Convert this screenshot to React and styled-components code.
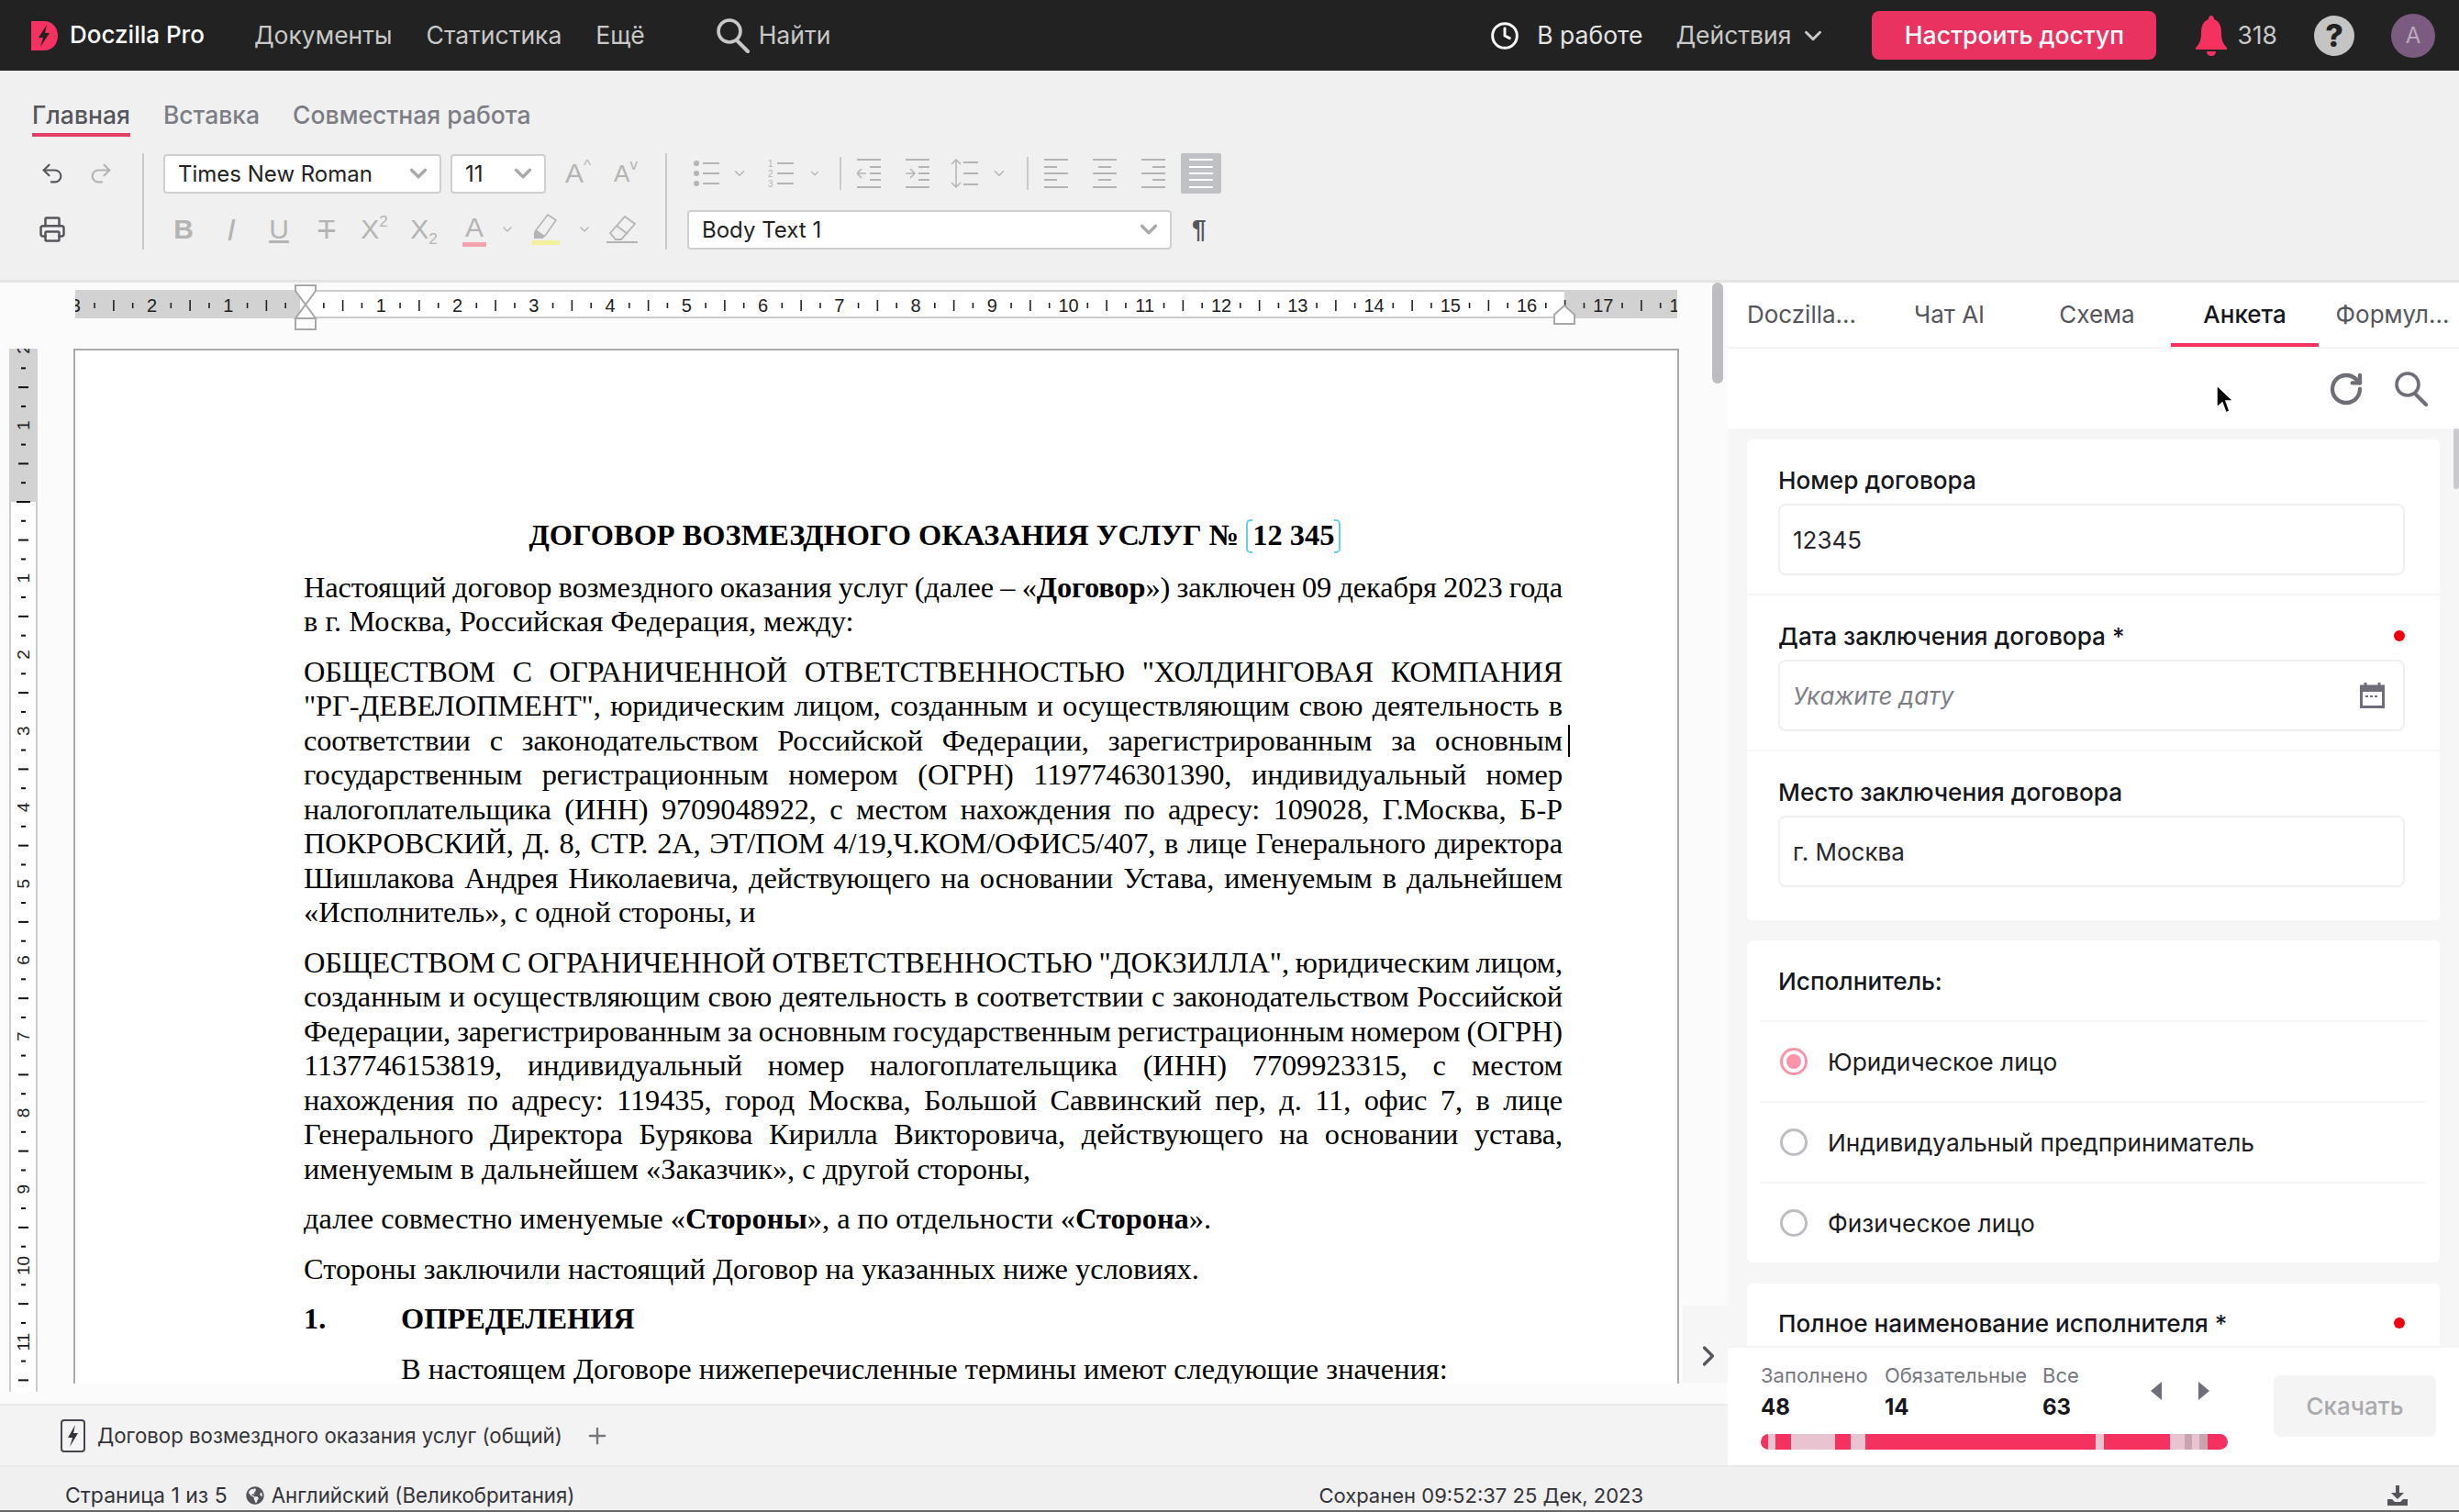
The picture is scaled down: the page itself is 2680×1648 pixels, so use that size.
import React from 'react';
import styled, { createGlobalStyle } from 'styled-components';
import { ChevronDown, ChevronRight, Clock, Plus, Printer, Redo2, RotateCw, Undo2 } from 'lucide-react';
import { FaGlobeAmericas } from 'react-icons/fa';

const GlobalStyle = createGlobalStyle`
  html, body {
    margin: 0;
    padding: 0;
    background: #fff;
    font-family: Inter, "Noto Sans", sans-serif;
  }
  * {
    box-sizing: border-box;
  }
`;

const PINK = '#e93260';
const UNIT = 83.25;

/* ---------- drawn icons ---------- */

const Logo = () => (
  <svg width="29" height="32" viewBox="0 0 29 32">
    <path d="M0 0 H14 C23 0 29 7 29 16 C29 25 23 32 14 32 H0 Z" fill="#f5325f" />
    <path d="M17 4 L8 18 H13 L10 28 L20 13 H15 Z" fill="#222" />
  </svg>
);

const Bell = () => (
  <svg width="34" height="44" viewBox="0 0 34 44">
    <path d="M17 0 C19 0 20 2 20 4 C26 6 28 12 28 19 C28 27 30 31 34 35 V37 H0 V35 C4 31 6 27 6 19 C6 12 8 6 14 4 C14 2 15 0 17 0 Z" fill="#f5325f" />
    <path d="M12 39 H22 C22 42 20 44 17 44 C14 44 12 42 12 39 Z" fill="#f5325f" />
  </svg>
);

const SearchGlyph = ({ color, size }) => (
  <svg width={size} height={size} viewBox="0 0 38 38" fill="none" stroke={color} strokeWidth="3.6" strokeLinecap="round">
    <circle cx="15" cy="14" r="12" />
    <path d="M23 24 L35 36" strokeWidth="4" />
  </svg>
);

const ListLines = ({ ordered }) => (
  <svg width="28" height="32" viewBox="0 0 28 32" fill="#b4b4b4" stroke="#b4b4b4">
    {ordered ? (
      <g stroke="none" fontSize="10" fontFamily="Liberation Sans">
        <text x="0" y="9">1</text>
        <text x="0" y="20">2</text>
        <text x="0" y="31">3</text>
      </g>
    ) : (
      <g stroke="none">
        <circle cx="3" cy="5" r="3" />
        <circle cx="3" cy="16" r="3" />
        <circle cx="3" cy="27" r="3" />
      </g>
    )}
    <path d="M10 5 H28 M10 16 H28 M10 27 H28" strokeWidth="2" />
  </svg>
);

const IndentIcon = ({ out }) => (
  <svg width="26" height="32" viewBox="0 0 26 32" fill="none" stroke="#b4b4b4" strokeWidth="2">
    <path d="M0 1 H26 M0 31 H26 M14 9 H26 M14 16 H26 M14 23 H26" />
    {out
      ? <path d="M10 16 H0 M5 11 L0 16 L5 21" strokeWidth="1.5" />
      : <path d="M0 16 H10 M5 11 L10 16 L5 21" strokeWidth="1.5" />}
  </svg>
);

const SpacingIcon = () => (
  <svg width="30" height="34" viewBox="0 0 30 34" fill="none" stroke="#b4b4b4" strokeWidth="2">
    <path d="M6 2 V32 M1 7 L6 2 L11 7 M1 27 L6 32 L11 27" strokeWidth="1.5" />
    <path d="M14 5 H30 M14 17 H30 M14 29 H30" />
  </svg>
);

const ALIGN_PATHS = {
  left: 'M0 1 H26 M0 9 H14 M0 16 H26 M0 23 H14 M0 31 H26',
  center: 'M0 1 H26 M6 9 H20 M0 16 H26 M6 23 H20 M0 31 H26',
  right: 'M0 1 H26 M12 9 H26 M0 16 H26 M12 23 H26 M0 31 H26',
  full: 'M0 1 H26 M0 9 H26 M0 16 H26 M0 23 H26 M0 31 H26',
};

const AlignIcon = ({ kind }) => (
  <svg width="26" height="32" viewBox="0 0 26 32" fill="none" stroke={kind === 'full' ? '#fff' : '#b4b4b4'} strokeWidth="2">
    <path d={ALIGN_PATHS[kind]} />
  </svg>
);

const MarkerIcon = () => (
  <svg width="30" height="34" viewBox="0 0 30 34" fill="none">
    <path d="M4 18 L17 1 L26 7 L14 24 H4 Z" stroke="#b4b4b4" strokeWidth="1.6" />
    <path d="M2 20 L2 27 H12 L14 24 L4 17 Z" fill="#b4b4b4" />
    <rect x="0" y="29" width="30" height="5" fill="#f3ef9d" />
  </svg>
);

const EraserIcon = () => (
  <svg width="34" height="32" viewBox="0 0 34 32" fill="none" stroke="#b4b4b4" strokeWidth="1.8">
    <path d="M4 20 L20 2 L31 10 L16 27 H10 Z M11 12 L23 21" />
    <path d="M0 30 H34" />
  </svg>
);

const CalendarIcon = () => (
  <svg width="27" height="28" viewBox="0 0 27 28" fill="none">
    <path d="M6 0 V4 M21 0 V4" stroke="#6e6e78" strokeWidth="3" />
    <rect x="1.5" y="4" width="24" height="22.5" stroke="#6e6e78" strokeWidth="3" />
    <rect x="1.5" y="4" width="24" height="6" fill="#6e6e78" />
    <path d="M6 15 H21" stroke="#6e6e78" strokeWidth="2" strokeDasharray="3 2" />
  </svg>
);

const DownloadIcon = () => (
  <svg width="22" height="22" viewBox="0 0 22 22" fill="#55555c">
    <path d="M9 0 H13 V8 H18 L11 15 L4 8 H9 Z" />
    <path d="M0 15 H5 L8 18 H14 L17 15 H22 V22 H0 Z" />
  </svg>
);

const DocBadge = () => (
  <svg width="27" height="36" viewBox="0 0 27 36" fill="none">
    <rect x="1" y="1" width="25" height="34" rx="3" stroke="#44444c" strokeWidth="2" />
    <path d="M16 6 L8 20 H13 L10 30 L19 15 H14 Z" fill="#33333a" />
  </svg>
);

const Cursor = () => (
  <svg width="20" height="32" viewBox="0 0 20 32">
    <path d="M1 1 V25 L7 20 L11 31 L15 29 L11 18 H19 Z" fill="#000" stroke="#fff" strokeWidth="1.5" />
  </svg>
);

const CaretArrow = ({ right }) => (
  <svg width="14" height="20" viewBox="0 0 14 20" fill="#6e6e78">
    <path d={right ? 'M1 0 L13 10 L1 20 Z' : 'M13 0 L1 10 L13 20 Z'} />
  </svg>
);

/* ---------- rulers ---------- */

const rulerTicks = (from, to) => {
  const ticks = [];
  for (let n = from; n < to; n++) {
    ticks.push({ at: n + 0.25, long: false }, { at: n + 0.5, long: true }, { at: n + 0.75, long: false });
  }
  return ticks;
};

const HorizontalRuler = () => {
  const zero = 250;
  const numbers = [-3, -2, -1, 1, 2, 3, 4, 5, 6, 7, 8, 9, 10, 11, 12, 13, 14, 15, 16, 17, 18];
  return (
    <RulerSvg width="1746" height="31">
      <rect width="1746" height="31" fill="#fff" />
      <path d="M0 1 H1746 M0 30 H1746" stroke="#ccc" strokeWidth="2" />
      <rect width="245" height="31" fill="#d2d2d2" />
      <rect x="1623" width="123" height="31" fill="#d2d2d2" />
      <svg width="1746" height="31">
        {rulerTicks(-3, 18).map(({ at, long }) => (
          <path key={at} d={`M${zero + at * UNIT} ${long ? 11 : 14} V${long ? 23 : 20}`} stroke="#222" strokeWidth="1.6" />
        ))}
        {numbers.map((n) => (
          <text key={n} x={zero + n * UNIT} y="24" fontSize="20" textAnchor="middle" fontFamily="Liberation Sans" fill="#222">
            {Math.abs(n)}
          </text>
        ))}
      </svg>
      <path d="M240 -5 H262 V1 L251 16 L240 1 Z M251 16 L262 31 H240 Z" fill="#fff" stroke="#a8a8a8" strokeWidth="2" />
      <rect x="240" y="31" width="22" height="12" fill="#fff" stroke="#a8a8a8" strokeWidth="2" />
      <path d="M1612 37 V27 L1623 17 L1634 27 V37 Z" fill="#fff" stroke="#a8a8a8" strokeWidth="2" />
    </RulerSvg>
  );
};

const VerticalRuler = () => {
  const zero = 167;
  const numbers = [-2, -1, 1, 2, 3, 4, 5, 6, 7, 8, 9, 10, 11];
  return (
    <RulerSvg width="31" height="1137">
      <rect width="31" height="1137" fill="#fff" />
      <path d="M1 0 V1137 M30 0 V1137" stroke="#ccc" strokeWidth="2" />
      <rect width="31" height={zero} fill="#d2d2d2" />
      <path d={`M8 ${zero} H23`} stroke="#111" strokeWidth="2" />
      <svg width="31" height="1137">
        {rulerTicks(-2, 12).map(({ at, long }) => (
          <path key={at} d={`M${long ? 10 : 13} ${zero + at * UNIT} H${long ? 21 : 18}`} stroke="#111" strokeWidth="2" />
        ))}
        {numbers.map((n) => (
          <text
            key={n}
            x="0"
            y="0"
            fontSize="19"
            textAnchor="middle"
            fontFamily="Liberation Sans"
            fill="#222"
            transform={`translate(22 ${zero + n * UNIT}) rotate(-90)`}
          >
            {Math.abs(n)}
          </text>
        ))}
      </svg>
    </RulerSvg>
  );
};

/* ---------- data ---------- */

const SECOND_PARAGRAPH = [
  'ОБЩЕСТВОМ С ОГРАНИЧЕННОЙ ОТВЕТСТВЕННОСТЬЮ "ХОЛДИНГОВАЯ КОМПАНИЯ',
  '"РГ-ДЕВЕЛОПМЕНТ", юридическим лицом, созданным и осуществляющим свою деятельность в',
  'соответствии с законодательством Российской Федерации, зарегистрированным за основным',
  'государственным регистрационным номером (ОГРН) 1197746301390, индивидуальный номер',
  'налогоплательщика (ИНН) 9709048922, с местом нахождения по адресу: 109028, Г.Москва, Б-Р',
  'ПОКРОВСКИЙ, Д. 8, СТР. 2А, ЭТ/ПОМ 4/19,Ч.КОМ/ОФИС5/407, в лице Генерального директора',
  'Шишлакова Андрея Николаевича, действующего на основании Устава, именуемым в дальнейшем',
  '«Исполнитель», с одной стороны, и',
];

const THIRD_PARAGRAPH = [
  'ОБЩЕСТВОМ С ОГРАНИЧЕННОЙ ОТВЕТСТВЕННОСТЬЮ "ДОКЗИЛЛА", юридическим лицом,',
  'созданным и осуществляющим свою деятельность в соответствии с законодательством Российской',
  'Федерации, зарегистрированным за основным государственным регистрационным номером (ОГРН)',
  '1137746153819, индивидуальный номер налогоплательщика (ИНН) 7709923315, с местом',
  'нахождения по адресу: 119435, город Москва, Большой Саввинский пер, д. 11, офис 7, в лице',
  'Генерального Директора Бурякова Кирилла Викторовича, действующего на основании устава,',
  'именуемым в дальнейшем «Заказчик», с другой стороны,',
];

const PANEL_TABS = ['Doczilla...', 'Чат AI', 'Схема', 'Анкета', 'Формул...'];
const RADIOS = ['Юридическое лицо', 'Индивидуальный предприниматель', 'Физическое лицо'];
const STATS = [
  { label: 'Заполнено', value: 48, width: 135 },
  { label: 'Обязательные', value: 14, width: 172 },
  { label: 'Все', value: 63, width: 90 },
];
// empty parts of the progress bar, in percent of its width
const GAPS = [
  { from: 1.6, to: 3.2, color: '#e9c3cf' },
  { from: 6.4, to: 16, color: '#e9c3cf' },
  { from: 19.2, to: 22.4, color: '#e9c3cf' },
  { from: 71.7, to: 73.4, color: '#e9c3cf' },
  { from: 87.6, to: 90.8, color: '#e9c3cf' },
  { from: 90.8, to: 92.4, color: '#c9a3b0' },
  { from: 92.4, to: 94, color: '#e9c3cf' },
  { from: 94, to: 95.6, color: '#c9a3b0' },
];

/* ---------- page ---------- */

const Justified = ({ lines }) => lines.map((line, i) => (
  <Line key={line} $justify={i < lines.length - 1}>{line}</Line>
));

const App = () => (
  <Page>
    <GlobalStyle />
    <TopBar>
      <Logo />
      <Brand>Doczilla Pro</Brand>
      <NavLink $first>Документы</NavLink>
      <NavLink>Статистика</NavLink>
      <NavLink>Ещё</NavLink>
      <SearchBox>
        <SearchGlyph size={38} color="#c8c8c8" />
        <NavText>Найти</NavText>
      </SearchBox>
      <TopRight>
        <Clock size={32} color="#fff" strokeWidth={2.2} />
        <StateText>В работе</StateText>
        <ActionsText>Действия</ActionsText>
        <ActionsChevron size={30} color="#c8c8c8" strokeWidth={2.4} />
        <AccessButton>Настроить доступ</AccessButton>
        <Bell />
        <Counter>318</Counter>
        <HelpBadge>?</HelpBadge>
        <Avatar>А</Avatar>
      </TopRight>
    </TopBar>

    <Ribbon>
      <RibbonTabs>
        <RibbonTab $active>Главная</RibbonTab>
        <RibbonTab>Вставка</RibbonTab>
        <RibbonTab>Совместная работа</RibbonTab>
      </RibbonTabs>
      <Toolbar>
        <HistoryGroup>
          <ToolRow>
            <Cell $w={44}><Undo2 size={28} color="#55555c" strokeWidth={1.8} /></Cell>
            <Cell $w={62}><Redo2 size={28} color="#b4b4b4" strokeWidth={1.8} /></Cell>
          </ToolRow>
          <ToolRow>
            <Cell $w={44}><Printer size={30} color="#55555c" strokeWidth={2} /></Cell>
          </ToolRow>
        </HistoryGroup>
        <Separator />
        <FontGroup>
          <ToolRow>
            <SelectBox $w={303} $left={21}>
              <SelectText>Times New Roman</SelectText>
              <ChevronDown size={30} color="#a9a9a9" strokeWidth={2.6} />
            </SelectBox>
            <SelectBox $w={104} $left={10}>
              <SelectText>11</SelectText>
              <ChevronDown size={30} color="#a9a9a9" strokeWidth={2.6} />
            </SelectBox>
            <Cell $w={70}><Glyph>A<Sup>^</Sup></Glyph></Cell>
            <Cell $w={34}><Glyph $small>A<Sup>v</Sup></Glyph></Cell>
          </ToolRow>
          <ToolRow $left={17}>
            <Cell $w={52}><Glyph $bold>B</Glyph></Cell>
            <Cell $w={52}><Glyph $italic $tall>I</Glyph></Cell>
            <Cell $w={52}><Glyph $under>U</Glyph></Cell>
            <Cell $w={52}><Glyph $strike>T</Glyph></Cell>
            <Cell $w={52}><Glyph>X<Sup>2</Sup></Glyph></Cell>
            <Cell $w={56}><Glyph>X<Sub>2</Sub></Glyph></Cell>
            <Cell $w={54}><ColorGlyph>A</ColorGlyph></Cell>
            <Cell $w={18}><ChevronDown size={16} color="#b4b4b4" /></Cell>
            <Cell $w={66}><MarkerIcon /></Cell>
            <Cell $w={18}><ChevronDown size={16} color="#b4b4b4" /></Cell>
            <Cell $w={64}><EraserIcon /></Cell>
          </ToolRow>
        </FontGroup>
        <Separator />
        <ParagraphGroup>
          <ToolRow $left={22}>
            <Cell $w={42}><ListLines /></Cell>
            <Cell $w={30}><ChevronDown size={18} color="#b4b4b4" /></Cell>
            <Cell $w={60}><ListLines ordered /></Cell>
            <Cell $w={14}><ChevronDown size={18} color="#b4b4b4" /></Cell>
            <MiniSeparator />
            <Cell $w={60}><IndentIcon out /></Cell>
            <Cell $w={46}><IndentIcon /></Cell>
            <Cell $w={56}><SpacingIcon /></Cell>
            <Cell $w={20}><ChevronDown size={18} color="#b4b4b4" /></Cell>
            <MiniSeparator />
            <Cell $w={60}><AlignIcon kind="left" /></Cell>
            <Cell $w={46}><AlignIcon kind="center" /></Cell>
            <Cell $w={60}><AlignIcon kind="right" /></Cell>
            <Cell $w={44} $active><AlignIcon kind="full" /></Cell>
          </ToolRow>
          <ToolRow>
            <SelectBox $w={528} $left={22}>
              <SelectText>Body Text 1</SelectText>
              <ChevronDown size={30} color="#a9a9a9" strokeWidth={2.6} />
            </SelectBox>
            <Pilcrow>¶</Pilcrow>
          </ToolRow>
        </ParagraphGroup>
      </Toolbar>
    </Ribbon>

    <Workspace>
      <DocColumn>
        <DocArea>
          <RulerTop><HorizontalRuler /></RulerTop>
          <PageRow>
            <VerticalRuler />
            <Sheet>
              <Title>
                ДОГОВОР ВОЗМЕЗДНОГО ОКАЗАНИЯ УСЛУГ № <Bracket>12 345</Bracket>
              </Title>
              <Paragraph>
                <Line $justify>Настоящий договор возмездного оказания услуг (далее – «<b>Договор</b>») заключен 09 декабря 2023 года</Line>
                <Line>в г. Москва, Российская Федерация, между:</Line>
              </Paragraph>
              <Paragraph>
                <Line $justify>{SECOND_PARAGRAPH[0]}</Line>
                <Line $justify>{SECOND_PARAGRAPH[1]}</Line>
                <Line $justify>{SECOND_PARAGRAPH[2]}<TextCaret /></Line>
                <Justified lines={SECOND_PARAGRAPH.slice(3)} />
              </Paragraph>
              <Paragraph>
                <Justified lines={THIRD_PARAGRAPH} />
              </Paragraph>
              <Paragraph>
                <Line>далее совместно именуемые «<b>Стороны</b>», а по отдельности «<b>Сторона</b>».</Line>
              </Paragraph>
              <Paragraph>
                <Line>Стороны заключили настоящий Договор на указанных ниже условиях.</Line>
              </Paragraph>
              <Heading>
                <HeadingNumber>1.</HeadingNumber>ОПРЕДЕЛЕНИЯ
              </Heading>
              <Indented>В настоящем Договоре нижеперечисленные термины имеют следующие значения:</Indented>
            </Sheet>
          </PageRow>
          <ScrollThumb />
          <CollapseTab><ChevronRight size={36} color="#55555c" strokeWidth={2.2} /></CollapseTab>
        </DocArea>
        <TabBar>
          <DocBadge />
          <TabTitle>Договор возмездного оказания услуг (общий)</TabTitle>
          <Plus size={28} color="#77777f" strokeWidth={2} />
        </TabBar>
      </DocColumn>

      <SidePanel>
        <PanelTabs>
          {PANEL_TABS.map((tab) => (
            <PanelTab key={tab} $active={tab === 'Анкета'}>{tab}</PanelTab>
          ))}
        </PanelTabs>
        <PanelTools>
          <RotateCw size={40} color="#6e6e78" strokeWidth={2.6} />
          <SearchGlyph size={38} color="#6e6e78" />
          <CursorSpot><Cursor /></CursorSpot>
        </PanelTools>
        <FormScroll>
          <FormThumb />
          <Card>
            <Field>
              <FieldLabel>Номер договора</FieldLabel>
              <InputBox>12345</InputBox>
            </Field>
            <Field>
              <FieldLabel>Дата заключения договора *<RequiredDot /></FieldLabel>
              <InputBox $placeholder>Укажите дату<CalendarIcon /></InputBox>
            </Field>
            <Field $last>
              <FieldLabel>Место заключения договора</FieldLabel>
              <InputBox>г. Москва</InputBox>
            </Field>
          </Card>
          <RadioCard>
            <RadioHeader>Исполнитель:</RadioHeader>
            {RADIOS.map((label, i) => (
              <RadioRow key={label} $last={i === RADIOS.length - 1}>
                <RadioMark $checked={i === 0} />
                {label}
              </RadioRow>
            ))}
          </RadioCard>
          <LastCard>
            <FieldLabel>Полное наименование исполнителя *<RequiredDot /></FieldLabel>
          </LastCard>
        </FormScroll>
        <PanelFooter>
          <FooterStats>
            <StatsRow>
              {STATS.map((stat) => (
                <Stat key={stat.label} $w={stat.width}>
                  <StatLabel>{stat.label}</StatLabel>
                  <StatValue>{stat.value}</StatValue>
                </Stat>
              ))}
              <Arrows>
                <CaretArrow />
                <CaretArrow right />
              </Arrows>
            </StatsRow>
            <ProgressBar>
              {GAPS.map((gap) => (
                <ProgressGap
                  key={gap.from}
                  style={{ left: `${gap.from}%`, width: `${gap.to - gap.from}%`, background: gap.color }}
                />
              ))}
            </ProgressBar>
          </FooterStats>
          <DownloadButton>Скачать</DownloadButton>
        </PanelFooter>
      </SidePanel>
    </Workspace>

    <StatusBar>
      <StatusText>Страница 1 из 5</StatusText>
      <LanguageText><FaGlobeAmericas size={20} color="#55555c" />Английский (Великобритания)</LanguageText>
      <SavedText>Сохранен 09:52:37 25 Дек, 2023</SavedText>
      <StatusIcon><DownloadIcon /></StatusIcon>
    </StatusBar>
  </Page>
);

const Page = styled.div`
  width: 2680px;
  height: 1648px;
  display: flex;
  flex-direction: column;
  overflow: hidden;
  border-bottom: 2px solid #666;
`;

const TopBar = styled.header`
  height: 77px;
  flex: none;
  display: flex;
  align-items: center;
  padding: 0 26px 0 34px;
  background: #222222;
  color: #c8c8c8;
  font-size: 26.5px;
`;

const Brand = styled.div`
  margin-left: 13px;
  padding-bottom: 2px;
  color: #fff;
  font-size: 26px;
  font-weight: 500;
`;

const NavLink = styled.div`
  margin-left: ${(p) => (p.$first ? '54px' : '37px')};
  padding-bottom: 2px;
`;

const SearchBox = styled.div`
  display: flex;
  align-items: center;
  gap: 9px;
  margin-left: 77px;
`;

const NavText = styled.span`
  padding-bottom: 2px;
`;

const TopRight = styled.div`
  margin-left: auto;
  display: flex;
  align-items: center;
`;

const StateText = styled.span`
  margin-left: 19px;
  padding-bottom: 2px;
  color: #e4e4e4;
`;

const ActionsText = styled.span`
  margin-left: 36px;
  padding-bottom: 2px;
`;

const ActionsChevron = styled(ChevronDown)`
  margin-left: 9px;
`;

const AccessButton = styled.div`
  width: 310px;
  height: 53px;
  margin: 0 43px 0 49px;
  padding-bottom: 2px;
  display: flex;
  align-items: center;
  justify-content: center;
  border-radius: 8px;
  background: ${PINK};
  color: #fff;
  font-weight: 500;
`;

const Counter = styled.span`
  margin-left: 11px;
  padding-bottom: 2px;
`;

const HelpBadge = styled.div`
  width: 44px;
  height: 44px;
  margin-left: 40px;
  display: flex;
  align-items: center;
  justify-content: center;
  border-radius: 50%;
  background: #c4c4c4;
  color: #222;
  font-size: 34px;
  font-weight: 800;
`;

const Avatar = styled.div`
  width: 48px;
  height: 48px;
  margin-left: 40px;
  display: flex;
  align-items: center;
  justify-content: center;
  border-radius: 50%;
  background: #7b5c80;
  color: #b9a9bd;
  font-size: 24px;
`;

const Ribbon = styled.section`
  height: 231px;
  flex: none;
  padding: 30px 0 0 35px;
  background: #f0f0f0;
  border-bottom: 3px solid #e4e4e4;
`;

const RibbonTabs = styled.nav`
  display: flex;
  gap: 36px;
  height: 42px;
`;

const RibbonTab = styled.div`
  height: 42px;
  font-size: 26.5px;
  font-weight: 500;
  line-height: 36px;
  color: ${(p) => (p.$active ? '#55555c' : '#7d7d86')};
  border-bottom: 4px solid ${(p) => (p.$active ? '#e43d66' : 'transparent')};
`;

const Toolbar = styled.div`
  display: flex;
  height: 105px;
  margin-top: 18px;
`;

const HistoryGroup = styled.div`
  width: 120px;
  display: flex;
  flex-direction: column;
  justify-content: space-between;
`;

const FontGroup = styled.div`
  width: 568px;
  display: flex;
  flex-direction: column;
  justify-content: space-between;
`;

const ParagraphGroup = styled.div`
  display: flex;
  flex-direction: column;
  justify-content: space-between;
`;

const ToolRow = styled.div`
  display: flex;
  align-items: center;
  height: 44px;
  margin-left: ${(p) => p.$left || 0}px;
`;

const Separator = styled.div`
  width: 2px;
  background: #cacaca;
`;

const MiniSeparator = styled.div`
  width: 2px;
  height: 36px;
  margin-left: 20px;
  background: #cacaca;
`;

const Cell = styled.div`
  width: ${(p) => p.$w}px;
  height: 44px;
  flex: none;
  display: flex;
  align-items: center;
  justify-content: center;
  border-radius: 2px;
  background: ${(p) => (p.$active ? '#c0c1c4' : 'transparent')};
`;

const SelectBox = styled.div`
  width: ${(p) => p.$w}px;
  height: 43px;
  margin-left: ${(p) => p.$left}px;
  padding: 0 8px 0 14px;
  flex: none;
  display: flex;
  align-items: center;
  justify-content: space-between;
  background: #fff;
  border: 2px solid #cfcfcf;
  border-radius: 4px;
`;

const SelectText = styled.span`
  font-size: 24px;
  color: #222;
`;

const Glyph = styled.span`
  position: relative;
  font-family: "Liberation Sans", sans-serif;
  font-size: ${(p) => (p.$small ? '26px' : p.$tall ? '34px' : '30px')};
  font-weight: ${(p) => (p.$bold ? 700 : 400)};
  font-style: ${(p) => (p.$italic ? 'italic' : 'normal')};
  color: #b4b4b4;
  text-decoration: ${(p) => (p.$under ? 'underline' : p.$strike ? 'line-through' : 'none')};
`;

const Sup = styled.sup`
  font-size: 17px;
  vertical-align: 13px;
  line-height: 0;
`;

const Sub = styled.sub`
  font-size: 17px;
  vertical-align: -6px;
  line-height: 0;
`;

const ColorGlyph = styled.span`
  font-family: "Liberation Sans", sans-serif;
  font-size: 30px;
  color: #b4b4b4;
  border-bottom: 5px solid #f3a3ad;
  padding: 0 3px;
  line-height: 33px;
`;

const Pilcrow = styled.span`
  margin-left: 22px;
  font-family: "Liberation Sans", sans-serif;
  font-size: 28px;
  font-weight: 700;
  color: #55555c;
`;

const Workspace = styled.main`
  height: 1289px;
  flex: none;
  display: flex;
`;

const DocColumn = styled.div`
  width: 1883px;
  flex: none;
  display: flex;
  flex-direction: column;
`;

const DocArea = styled.div`
  position: relative;
  height: 1222px;
  flex: none;
  background: #fbfbfb;
`;

const RulerTop = styled.div`
  height: 39px;
  padding: 8px 0 0 82px;
`;

const RulerSvg = styled.svg`
  display: block;
  flex: none;
  overflow: visible;
`;

const PageRow = styled.div`
  display: flex;
  gap: 39px;
  height: 1160px;
  margin-top: 33px;
  padding-left: 10px;
  align-items: flex-start;
`;

const Sheet = styled.article`
  width: 1750px;
  height: 1128px;
  flex: none;
  padding: 183px 125px 0 249px;
  overflow: hidden;
  background: #fff;
  border: 2px solid #aaa;
  border-bottom: none;
  font-family: "Liberation Serif", "Times New Roman", serif;
  font-size: 32.4px;
  line-height: 37.5px;
  color: #000;
`;

const Title = styled.h1`
  margin: 0 0 19px;
  font-size: 32.4px;
  line-height: 37.5px;
  font-weight: 700;
  text-align: center;
  padding-left: 4px;
`;

const Bracket = styled.span`
  position: relative;
  display: inline-block;
  padding: 0 7px;

  &::before,
  &::after {
    content: '';
    position: absolute;
    top: 1px;
    bottom: 0;
    width: 5px;
    border: 2px solid #63d2e6;
  }
  &::before {
    left: 0;
    border-right: none;
    border-radius: 5px 0 0 5px;
  }
  &::after {
    right: 0;
    border-left: none;
    border-radius: 0 5px 5px 0;
  }
`;

const Paragraph = styled.div`
  margin-bottom: 17px;
`;

/* negative word-spacing lets a tight line stay on one row, justify fills the rest */
const Line = styled.div`
  position: relative;
  text-align: ${(p) => (p.$justify ? 'justify' : 'left')};
  text-align-last: ${(p) => (p.$justify ? 'justify' : 'left')};
  word-spacing: ${(p) => (p.$justify ? '-4px' : '0')};
  letter-spacing: ${(p) => (p.$justify ? '-0.1px' : '0')};
`;

const TextCaret = styled.span`
  position: absolute;
  right: -8px;
  top: 1px;
  width: 2px;
  height: 35px;
  background: #000;
`;

const Heading = styled.h2`
  margin: 17px 0 17px;
  font-size: 32.4px;
  line-height: 37.5px;
  font-weight: 700;
  display: flex;
`;

const HeadingNumber = styled.span`
  width: 106px;
`;

const Indented = styled.div`
  padding-left: 106px;
`;

const ScrollThumb = styled.div`
  position: absolute;
  top: 0;
  left: 1866px;
  width: 12px;
  height: 110px;
  border-radius: 6px;
  background: #bdbdc2;
`;

const CollapseTab = styled.div`
  position: absolute;
  left: 1834px;
  top: 1115px;
  width: 49px;
  height: 84px;
  padding: 37px 0 0 6px;
  display: flex;
  justify-content: center;
  align-items: flex-start;
  background: #f6f6f6;
`;

const TabBar = styled.div`
  height: 67px;
  flex: none;
  display: flex;
  align-items: center;
  padding-left: 66px;
  background: #f3f3f3;
  border-top: 2px solid #ebebeb;
`;

const TabTitle = styled.span`
  margin: 0 24px 0 13px;
  font-size: 22.25px;
  color: #33333a;
`;

const SidePanel = styled.aside`
  position: relative;
  width: 797px;
  flex: none;
  display: flex;
  flex-direction: column;
  background: #fff;
`;

const PanelTabs = styled.div`
  height: 72px;
  flex: none;
  display: flex;
  border-bottom: 2px solid #f2f2f2;
`;

const PanelTab = styled.div`
  width: 161px;
  flex: none;
  padding-top: 19px;
  text-align: center;
  font-size: 26px;
  font-weight: ${(p) => (p.$active ? 500 : 400)};
  color: ${(p) => (p.$active ? '#16161d' : '#55555c')};
  border-bottom: 4px solid ${(p) => (p.$active ? '#f5325f' : 'transparent')};
`;

const PanelTools = styled.div`
  position: relative;
  height: 87px;
  flex: none;
  display: flex;
  align-items: center;
  justify-content: flex-end;
  gap: 32px;
  padding-right: 33px;
`;

const CursorSpot = styled.div`
  position: absolute;
  left: 532px;
  top: 39px;
`;

const FormScroll = styled.div`
  position: relative;
  flex: 1;
  min-height: 0;
  overflow: hidden;
  padding: 12px 21px 0;
  background: #f6f6f6;
`;

const FormThumb = styled.div`
  position: absolute;
  top: 0;
  right: 0;
  width: 6px;
  height: 66px;
  border-radius: 3px;
  background: #c9c9ce;
`;

const Card = styled.section`
  width: 755px;
  margin-bottom: 22px;
  border-radius: 6px;
  background: #fff;
`;

const Field = styled.div`
  padding: 29px 38px ${(p) => (p.$last ? '36px' : '20px')} 34px;
  border-bottom: ${(p) => (p.$last ? 'none' : '2px solid #f5f5f5')};
`;

const FieldLabel = styled.div`
  height: 30px;
  display: flex;
  align-items: center;
  justify-content: space-between;
  font-size: 26.2px;
  font-weight: 500;
  color: #16161d;
`;

const RequiredDot = styled.span`
  width: 12px;
  height: 12px;
  border-radius: 50%;
  background: #f0000f;
`;

const InputBox = styled.div`
  height: 78px;
  margin-top: 11px;
  padding: 0 20px 0 14px;
  display: flex;
  align-items: center;
  justify-content: space-between;
  border: 2px solid #f0f0f0;
  border-radius: 8px;
  font-size: 26px;
  color: ${(p) => (p.$placeholder ? '#7d7d86' : '#26262c')};
  font-style: ${(p) => (p.$placeholder ? 'italic' : 'normal')};
`;

const RadioCard = styled.section`
  width: 755px;
  margin-bottom: 23px;
  padding: 0 15px;
  border-radius: 6px;
  background: #fff;
`;

const RadioHeader = styled.div`
  height: 89px;
  padding: 30px 19px 0;
  font-size: 26.2px;
  font-weight: 500;
  line-height: 30px;
  color: #16161d;
  border-bottom: 2px solid #f5f5f5;
`;

const RadioRow = styled.div`
  height: ${(p) => (p.$last ? '86px' : '88px')};
  padding-left: 21px;
  display: flex;
  align-items: center;
  gap: 22px;
  font-size: 26.3px;
  color: #1c1c22;
  border-bottom: ${(p) => (p.$last ? 'none' : '2px solid #f5f5f5')};
`;

const RadioMark = styled.span`
  width: 30px;
  height: 30px;
  flex: none;
  display: flex;
  align-items: center;
  justify-content: center;
  border-radius: 50%;
  border: 3px solid ${(p) => (p.$checked ? '#fb93aa' : '#bcbcc2')};

  &::after {
    content: '';
    width: 16px;
    height: 16px;
    border-radius: 50%;
    background: ${(p) => (p.$checked ? '#fb93aa' : 'transparent')};
  }
`;

const LastCard = styled.section`
  width: 755px;
  height: 200px;
  padding: 28px 38px 28px 34px;
  border-radius: 6px;
  background: #fff;
`;

const PanelFooter = styled.footer`
  height: 130px;
  flex: none;
  display: flex;
  padding: 15px 25px 0 36px;
  background: #fff;
  border-top: 2px solid #f4f4f4;
`;

const FooterStats = styled.div`
  width: 509px;
`;

const StatsRow = styled.div`
  position: relative;
  display: flex;
  height: 79px;
`;

const Stat = styled.div`
  width: ${(p) => p.$w}px;
`;

const StatLabel = styled.div`
  height: 30px;
  font-size: 22px;
  line-height: 30px;
  white-space: nowrap;
  color: #77777f;
`;

const StatValue = styled.div`
  margin-top: 6px;
  font-size: 24px;
  line-height: 28px;
  font-weight: 700;
  color: #16161d;
`;

const Arrows = styled.div`
  position: absolute;
  top: 22px;
  left: 424px;
  display: flex;
  gap: 38px;
`;

const ProgressBar = styled.div`
  position: relative;
  height: 17px;
  border-radius: 9px;
  overflow: hidden;
  background: #f5325f;
`;

const ProgressGap = styled.span`
  position: absolute;
  top: 0;
  bottom: 0;
`;

const DownloadButton = styled.div`
  width: 177px;
  height: 67px;
  margin: 15px 0 0 auto;
  display: flex;
  align-items: center;
  justify-content: center;
  border-radius: 8px;
  background: #f4f4f4;
  font-size: 26px;
  font-weight: 500;
  color: #a9a9ae;
`;

const StatusBar = styled.div`
  flex: 1;
  display: flex;
  align-items: center;
  padding: 14px 56px 0 71px;
  background: #f0f0f0;
  border-top: 2px solid #e8e8e8;
  font-size: 22.25px;
  color: #33333a;
`;

const StatusText = styled.span`
  font-size: 23px;
`;

const LanguageText = styled.span`
  display: flex;
  align-items: center;
  gap: 8px;
  margin-left: 20px;
`;

const SavedText = styled.span`
  margin-left: 811px;
  font-size: 22px;
`;

const StatusIcon = styled.span`
  display: flex;
  margin-left: auto;
`;

export default App;
